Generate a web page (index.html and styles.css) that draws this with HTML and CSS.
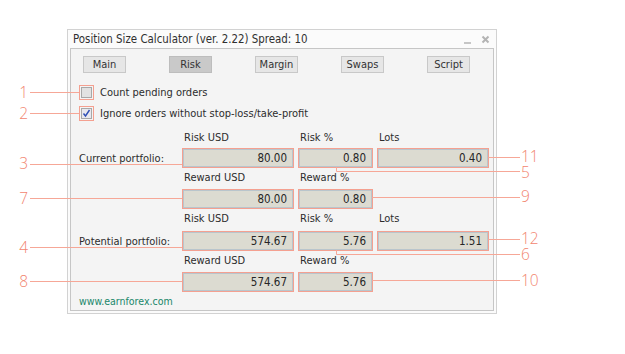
FILE: index.html
```html
<!DOCTYPE html>
<html lang="en">
  <head>
    <meta charset="UTF-8" />
    <meta name="viewport" content="width=device-width, initial-scale=1.0" />
    <title>Position Size Calculator</title>
    <link rel="stylesheet" href="styles.css">
  </head>
  <body>
    <main class="stage">
      <section class="window">
        <header class="titlebar">
          <span class="title">Position Size Calculator (ver. 2.22) Spread: 10</span>
          <span class="controls">
            <svg width="9" height="9" viewBox="0 0 9 9"><path d="M1 8h7" stroke="#b4b4b4" stroke-width="1.5"/></svg>
            <svg width="9" height="9" viewBox="0 0 9 9"><path d="M1.5 1.5l6 6M7.5 1.5l-6 6" stroke="#b4b4b4" stroke-width="2"/></svg>
          </span>
        </header>

        <div class="panel">
          <nav class="tabs">
            <button class="tab">Main</button>
            <button class="tab active">Risk</button>
            <button class="tab">Margin</button>
            <button class="tab">Swaps</button>
            <button class="tab">Script</button>
          </nav>

          <label class="check-row">
            <span class="mark"><span class="box"></span></span>
            Count pending orders
          </label>
          <label class="check-row">
            <span class="mark"><span class="box checked">
              <svg width="9" height="9" viewBox="0 0 9 9"><path d="M1.5 4.5l2 2.5 4-6" fill="none" stroke="#2f4fb5" stroke-width="1.4"/></svg>
            </span></span>
            Ignore orders without stop-loss/take-profit
          </label>

          <div class="grid">
            <span></span><span class="head">Risk USD</span><span class="head">Risk %</span><span class="head">Lots</span>
            <span class="row-label">Current portfolio:</span>
            <span class="field">80.00</span><span class="field">0.80</span><span class="field">0.40</span>
            <span></span><span class="head">Reward USD</span><span class="head">Reward %</span><span></span>
            <span></span>
            <span class="field">80.00</span><span class="field">0.80</span><span></span>

            <span></span><span class="head">Risk USD</span><span class="head">Risk %</span><span class="head">Lots</span>
            <span class="row-label">Potential portfolio:</span>
            <span class="field">574.67</span><span class="field">5.76</span><span class="field">1.51</span>
            <span></span><span class="head">Reward USD</span><span class="head">Reward %</span><span></span>
            <span></span>
            <span class="field">574.67</span><span class="field">5.76</span><span></span>
          </div>

          <footer class="site">www.earnforex.com</footer>
        </div>
      </section>

      <svg class="callouts" width="625" height="354" viewBox="0 0 625 354">
        <g fill="none" stroke="#f6a797" stroke-width="1">
          <path d="M30 92.5H79"/>
          <path d="M30 113.5H79"/>
          <path d="M30 164.5H182"/>
          <path d="M30 198.5H182"/>
          <path d="M30 247.5H182"/>
          <path d="M30 281.5H182"/>
          <path d="M488 157.5H520"/>
          <path d="M336.5 167V171.5H520"/>
          <path d="M372 197.5H520"/>
          <path d="M488 239.5H520"/>
          <path d="M336.5 250V254.5H520"/>
          <path d="M372 280.5H520"/>
        </g>
      </svg>

      <span class="num left n1">1</span>
      <span class="num left n2">2</span>
      <span class="num left n3">3</span>
      <span class="num left n7">7</span>
      <span class="num left n4">4</span>
      <span class="num left n8">8</span>
      <span class="num right n11">11</span>
      <span class="num right n5">5</span>
      <span class="num right n9">9</span>
      <span class="num right n12">12</span>
      <span class="num right n6">6</span>
      <span class="num right n10">10</span>
    </main>
  </body>
</html>
```

FILE: styles.css
```css
body {
  margin: 0;
  background-color: #ffffff;
}
.stage {
  position: relative;
  width: 625px;
  height: 354px;
  box-sizing: border-box;
  padding: 29px 0 0 67px;
  font-family: "DejaVu Sans Condensed", "DejaVu Sans", sans-serif;
  font-stretch: condensed;
  font-size: 11px;
  color: #2c2c2c;
}
.window {
  width: 430px;
  height: 285px;
  box-sizing: border-box;
  border: 1px solid #d2d2d2;
  background-color: #fbfbfb;
  padding: 0 2px 2px;
  display: flex;
  flex-direction: column;
}
.titlebar {
  height: 18px;
  display: flex;
  align-items: center;
  justify-content: space-between;
  padding: 0 4px 0 3px;
}
.title {
  font-size: 11.4px;
  color: #303030;
}
.controls {
  display: flex;
  gap: 9px;
  align-items: center;
}
.panel {
  flex: 1;
  border: 1px solid #c6c6c6;
  background-color: #f4f4f4;
  padding: 0 8px;
  display: flex;
  flex-direction: column;
}
.tabs {
  display: flex;
  gap: 43px;
  margin: 7px 0 0 4px;
}
.tab {
  width: 43px;
  height: 17px;
  padding: 0;
  font: inherit;
  color: #333333;
  border: 1px solid #c8c8c8;
  background-color: #e6e6e6;
}
.tab.active {
  background-color: #c9c9c9;
  border-color: #bdbdbd;
}
.check-row {
  display: flex;
  align-items: center;
  gap: 6px;
  height: 15px;
  margin-top: 12px;
}
.check-row + .check-row {
  margin-top: 6px;
}
.mark {
  width: 13px;
  height: 13px;
  border: 1px solid #f4a090;
  display: flex;
  align-items: center;
  justify-content: center;
}
.box {
  width: 9px;
  height: 9px;
  border: 1px solid #a8a8a8;
  background-color: #e2e2e2;
  display: flex;
  align-items: center;
  justify-content: center;
}
.box.checked {
  background-color: #e8e8ee;
}
.grid {
  display: grid;
  grid-template-columns: 99px 112px 75px 112px;
  grid-template-rows: 18px 20px 21px 20px 22px 20px 21px 20px;
  column-gap: 4px;
  margin-top: 9px;
}
.head {
  align-self: center;
  padding: 0 0 3px 2px;
}
.row-label {
  align-self: center;
}
.field {
  box-sizing: border-box;
  border: 1px solid #f4a090;
  box-shadow: inset 0 0 0 1px #b9c5cc;
  background-color: #dcdbd1;
  text-align: right;
  padding-right: 6px;
  line-height: 18px;
  font-size: 11.5px;
  color: #262626;
}
.site {
  margin-top: 3px;
  color: #20876a;
  font-size: 10.5px;
}

/* callout lines and numbers drawn over the window */
.callouts {
  position: absolute;
  left: 0;
  top: 0;
}
.num {
  position: absolute;
  font-family: "Open Sans", sans-serif;
  font-weight: 300;
  font-stretch: normal;
  font-size: 15.5px;
  line-height: 12px;
  color: #f2856f;
}
.num.left {
  left: 0;
  width: 28px;
  text-align: right;
}
.num.right {
  left: 521px;
}
.n1 { top: 86px; }
.n2 { top: 107px; }
.n3 { top: 157px; }
.n7 { top: 192px; }
.n4 { top: 241px; }
.n8 { top: 275px; }
.n11 { top: 150px; }
.n5 { top: 166px; }
.n9 { top: 190px; }
.n12 { top: 232px; }
.n6 { top: 248px; }
.n10 { top: 274px; }
```
